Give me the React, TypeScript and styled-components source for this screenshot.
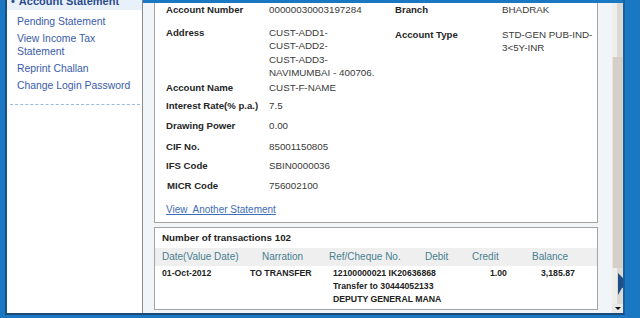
import * as React from 'react';
import styled, { createGlobalStyle } from 'styled-components';

const GlobalStyle = createGlobalStyle`
    html, body {
        margin: 0;
        padding: 0;
        background: #1a78c2;
    }
    body {
        font-family: "Liberation Sans", Arial, sans-serif;
    }
`;

const Frame = styled.div`
    width: 640px;
    height: 318px;
    box-sizing: border-box;
    padding: 0 15px 3px 5px;
    background: #1a78c2;
    display: flex;
    overflow: hidden;
`;

const Window = styled.div`
    flex: 1;
    display: flex;
    min-height: 0;
    border-left: 2px solid #1b4d7e;
    border-right: 2px solid #1d5f9e;
    border-bottom: 2px solid #1b4a78;
`;

const Sidebar = styled.div`
    width: 136px;
    flex-shrink: 0;
    box-sizing: border-box;
    background: #fff;
    border-right: 1px solid #8a8a8a;
`;

const ActiveItem = styled.div`
    margin-top: -8px;
    height: 18px;
    padding-left: 4px;
    display: flex;
    align-items: center;
    gap: 4px;
    background: #e8f0fa;
    color: #2b4c8c;
    font-size: 11px;
    font-weight: bold;
    white-space: nowrap;
`;

const NavList = styled.ul`
    list-style: none;
    margin: 0;
    padding: 4.5px 0 0 10px;
    display: flex;
    flex-direction: column;
    gap: 4px;
`;

const NavLink = styled.li`
    font-size: 10.4px;
    line-height: 13px;
    color: #3a5cab;
    width: 118px;
`;

const NavRule = styled.div`
    margin: 12.5px 2px 0 3px;
    border-top: 1px dashed #9db7de;
`;

const RightCol = styled.div`
    flex: 1;
    display: flex;
    flex-direction: column;
    min-width: 0;
`;

const TopStrip = styled.div`
    height: 3px;
    flex-shrink: 0;
    background: #1a78c2;
`;

const Body = styled.div`
    flex: 1;
    display: flex;
    min-height: 0;
`;

const Main = styled.div`
    flex: 1;
    min-width: 0;
    background: #f2f5f7;
    padding: 0 14px 0 11px;
`;

const Panel = styled.div<{ $top?: boolean }>`
    background: #fff;
    border: 1px solid #a3a3a3;
    border-top: ${p => (p.$top ? '1px solid #a3a3a3' : 'none')};
    margin-top: ${p => (p.$top ? '4px' : '0')};
`;

const Details = styled.div`
    padding: 0 0 1px 11px;
`;

const DetailRow = styled.div<{ $h?: number; $top?: number }>`
    box-sizing: border-box;
    display: flex;
    align-items: ${p => (p.$top ? 'flex-start' : 'center')};
    height: ${p => (p.$h ? `${p.$h}px` : 'auto')};
    padding-top: ${p => p.$top || 0}px;
`;

const Label = styled.div<{ $w?: number; $indent?: number; $drop?: number }>`
    flex: 0 0 ${p => p.$w || 103}px;
    min-width: ${p => p.$w || 103}px;
    box-sizing: border-box;
    font-size: 9.6px;
    font-weight: bold;
    color: #262626;
    line-height: 13.4px;
    white-space: nowrap;
    padding-left: ${p => p.$indent || 0}px;
    margin-top: ${p => p.$drop || 0}px;
`;

const Value = styled.div<{ $w?: number; $drop?: number }>`
    flex: ${p => (p.$w ? `0 0 ${p.$w}px` : '1 1 0')};
    min-width: ${p => (p.$w ? `${p.$w}px` : '0')};
    font-size: 9.8px;
    color: #3a3a3a;
    line-height: 13.4px;
    white-space: nowrap;
    margin-top: ${p => p.$drop || 0}px;
`;

const StatementLink = styled.a`
    font-size: 10px;
    color: #3d6db5;
    text-decoration: underline;
    white-space: pre;
`;

const TxTitle = styled.div`
    height: 20px;
    display: flex;
    align-items: center;
    padding-left: 7px;
    font-size: 9.8px;
    font-weight: bold;
    color: #222;
`;

const TxGrid = styled.div`
    display: grid;
    grid-template-columns: 95px 77px 93px 45px 60px minmax(0, 1fr);
`;

const HeadCell = styled.div<{ $pad: number }>`
    height: 18px;
    display: flex;
    align-items: center;
    padding-left: ${p => p.$pad}px;
    background: #efefef;
    font-size: 10px;
    color: #47808f;
    white-space: nowrap;
`;

const DataCell = styled.div<{ $pad: number }>`
    padding: 1px 0 3px ${p => p.$pad}px;
    font-size: 8.7px;
    font-weight: bold;
    line-height: 13px;
    color: #222;
    white-space: nowrap;
`;

const Scrollbar = styled.div`
    width: 11px;
    flex-shrink: 0;
    position: relative;
    overflow: hidden;
    display: flex;
    flex-direction: column;
    background: linear-gradient(to right, #eeeeec 45%, #dcd9d4 45%);
`;

const Thumb = styled.div`
    margin-top: 54px;
    height: 211px;
    box-sizing: border-box;
    background: #d4d0c8;
    border-left: 1px solid #e6e4df;
`;

const DownButton = styled.div`
    margin-top: auto;
    height: 9px;
    display: flex;
    align-items: center;
    justify-content: center;
    background: #ebe9e5;
    &::after {
        content: '';
        border-left: 3px solid transparent;
        border-right: 3px solid transparent;
        border-top: 3px solid #111;
    }
`;

const Pointer = styled.svg`
    position: absolute;
    left: 0;
    top: 0;
`;

const navItems = [
    'Pending Statement',
    'View Income Tax Statement',
    'Reprint Challan',
    'Change Login Password',
];

const columns = [
    { head: 'Date(Value Date)', hp: 7, dp: 7, data: ['01-Oct-2012'] },
    { head: 'Narration', hp: 12, dp: 0, data: ['TO TRANSFER'] },
    {
        head: 'Ref/Cheque No.',
        hp: 2,
        dp: 6,
        data: ['12100000021 IK20636868', 'Transfer to 30444052133', 'DEPUTY GENERAL MANA'],
    },
    { head: 'Debit', hp: 5, dp: 0, data: [] },
    { head: 'Credit', hp: 7, dp: 25, data: ['1.00'] },
    { head: 'Balance', hp: 7, dp: 16, data: ['3,185.87'] },
];

const simpleRows: [string, string, number, number?][] = [
    ['Account Name', 'CUST-F-NAME', 17],
    ['Interest Rate(% p.a.)', '7.5', 19],
    ['Drawing Power', '0.00', 21],
    ['CIF No.', '85001150805', 21],
    ['IFS Code', 'SBIN0000036', 17],
    ['MICR Code', '756002100', 23, 1],
];

export default function App(): JSX.Element {
    return (
        <>
            <GlobalStyle />
            <Frame>
                <Window>
                    <Sidebar>
                        <ActiveItem>
                            <span>•</span>
                            <span>Account Statement</span>
                        </ActiveItem>
                        <NavList>
                            {navItems.map(item => (
                                <NavLink key={item}>{item}</NavLink>
                            ))}
                        </NavList>
                        <NavRule />
                    </Sidebar>
                    <RightCol>
                        <TopStrip />
                        <Body>
                            <Main>
                                <Panel>
                                    <Details>
                                        <DetailRow $h={14}>
                                            <Label>Account Number</Label>
                                            <Value $w={126}>00000030003197284</Value>
                                            <Label $w={107}>Branch</Label>
                                            <Value>BHADRAK</Value>
                                        </DetailRow>
                                        <DetailRow $h={62.6} $top={9}>
                                            <Label>Address</Label>
                                            <Value $w={126}>
                                                CUST-ADD1-
                                                <br />
                                                CUST-ADD2-
                                                <br />
                                                CUST-ADD3-
                                                <br />
                                                NAVIMUMBAI - 400706.
                                            </Value>
                                            <Label $w={107} $drop={2}>Account Type</Label>
                                            <Value $drop={2}>
                                                STD-GEN PUB-IND-
                                                <br />
                                                3&lt;5Y-INR
                                            </Value>
                                        </DetailRow>
                                        {simpleRows.map(([label, value, h, indent]) => (
                                            <DetailRow key={label} $h={h}>
                                                <Label $indent={indent}>{label}</Label>
                                                <Value>{value}</Value>
                                            </DetailRow>
                                        ))}
                                        <DetailRow $h={23}>
                                            <StatementLink>View  Another Statement</StatementLink>
                                        </DetailRow>
                                    </Details>
                                </Panel>
                                <Panel $top>
                                    <TxTitle>Number of transactions 102</TxTitle>
                                    <TxGrid>
                                        {columns.map(c => (
                                            <HeadCell key={c.head} $pad={c.hp}>
                                                {c.head}
                                            </HeadCell>
                                        ))}
                                        {columns.map(c => (
                                            <DataCell key={c.head} $pad={c.dp}>
                                                {c.data.map(line => (
                                                    <div key={line}>{line}</div>
                                                ))}
                                            </DataCell>
                                        ))}
                                    </TxGrid>
                                </Panel>
                            </Main>
                            <Scrollbar>
                                <Thumb />
                                <DownButton />
                                <Pointer width="11" height="310" viewBox="0 0 11 310">
                                    <polygon points="6,270 14,278 14,284 10,285 6,292" fill="#1f4f86" />
                                </Pointer>
                            </Scrollbar>
                        </Body>
                    </RightCol>
                </Window>
            </Frame>
        </>
    );
}
